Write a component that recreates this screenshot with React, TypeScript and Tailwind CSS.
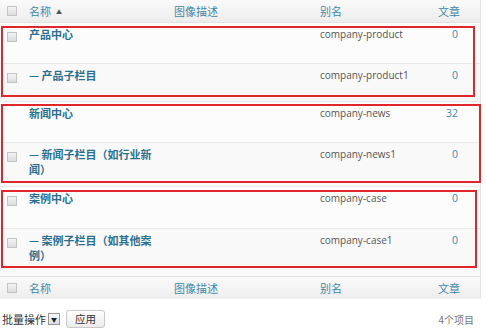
import React from "react";

const rows = [
    { name: "产品中心", slug: "company-product", count: "0", check: true, h: "h-[40px]" },
    { name: "— 产品子栏目", slug: "company-product1", count: "0", check: true, h: "h-[38px]" },
    { name: "新闻中心", slug: "company-news", count: "32", check: false, h: "h-[41px]" },
    { name: "— 新闻子栏目（如行业新闻）", slug: "company-news1", count: "0", check: true, h: "h-[44px]" },
    { name: "案例中心", slug: "company-case", count: "0", check: true, h: "h-[42px]" },
    { name: "— 案例子栏目（如其他案例）", slug: "company-case1", count: "0", check: true, h: "h-[48px]" },
];

const cjk = "font-['Noto_Sans_CJK_SC','Noto_Sans',sans-serif]";
const latin = "font-['Open_Sans','Noto_Sans_CJK_SC',sans-serif]";

function Checkbox() {
    return (
        <span className="block w-[10px] h-[10px] border border-[#c4c4c4] bg-linear-to-b from-[#f4f4f4] to-[#dcdcdc]" />
    );
}

function HeadRow({ sorted, top }: { sorted?: boolean; top?: boolean }) {
    return (
        <div
            className={`flex h-[23px] items-center bg-linear-to-b from-[#fafafa] to-[#ededed] text-[11px] text-[#3f88a8] ${cjk} ${top ? "border-b" : "border-t"} border-[#e2e2e2]`}
        >
            <div className="w-[24px] pl-[7px]">
                <Checkbox />
            </div>
            <div className="w-[146px] pl-[5px] flex items-center gap-[5px]">
                名称
                {sorted && <span className="text-[6px] text-[#555] mt-[1px]">▲</span>}
            </div>
            <div className="w-[145px] pl-[4px]">图像描述</div>
            <div className="flex-1 pl-[5px]">别名</div>
            <div className="w-[60px] pr-[20px] text-right">文章</div>
        </div>
    );
}

export default function App() {
    return (
        <div className="relative w-[486px] h-[334px] bg-white overflow-hidden">
            <div className="w-[481px] bg-[#f9f9f9] border-r border-[#e4e4e4]">
                <HeadRow sorted top />
                {rows.map((r, i) => (
                    <div
                        key={r.slug}
                        className={`flex ${r.h} ${i > 0 ? "border-t border-[#e8e8e8]" : ""} ${i % 2 ? "bg-[#f9f9f9]" : "bg-[#fcfcfc]"}`}
                    >
                        <div className="w-[24px] pl-[7px] pt-[9px]">{r.check && <Checkbox />}</div>
                        <div className="w-[146px] pl-[5px] pt-[4px]">
                            <div className={`w-[124px] text-[11px] leading-[15px] font-bold text-[#2a6f8f] ${cjk}`}>{r.name}</div>
                        </div>
                        <div className="w-[145px]" />
                        <div className={`flex-1 pl-[5px] pt-[4px] text-[10px] leading-[15px] text-[#555] ${latin}`}>{r.slug}</div>
                        <div className={`w-[60px] pr-[22px] pt-[4px] text-right text-[10.5px] leading-[15px] text-[#3f88a8] ${latin}`}>{r.count}</div>
                    </div>
                ))}
                <HeadRow />
            </div>

            <div className="flex items-center justify-between pt-[11px] pr-[12px]">
                <div className={`flex items-center gap-[6px] pl-[2px] text-[11px] text-[#333] ${cjk}`}>
                    <div className="flex items-center h-[18px] gap-[2px]">
                        <span>批量操作</span>
                        <span className="w-[12px] h-[12px] border border-[#999] bg-linear-to-b from-[#fafafa] to-[#dedede] flex items-center justify-center text-[6px] text-[#222]">▼</span>
                    </div>
                    <button className="h-[18px] px-[8px] border border-[#c8c8c8] rounded-[3px] bg-linear-to-b from-[#fefefe] to-[#ececec] text-[10.5px] text-[#333]">
                        应用
                    </button>
                </div>
                <div className={`text-[10px] text-[#777] ${cjk}`}>4个项目</div>
            </div>

            <div className="absolute left-[1px] top-[26px] w-[474px] h-[71px] border-2 border-[#e0262b]" />
            <div className="absolute left-[1px] top-[104px] w-[480px] h-[79px] border-2 border-[#e0262b]" />
            <div className="absolute left-[1px] top-[190px] w-[476px] h-[78px] border-2 border-[#e0262b]" />
        </div>
    );
}
